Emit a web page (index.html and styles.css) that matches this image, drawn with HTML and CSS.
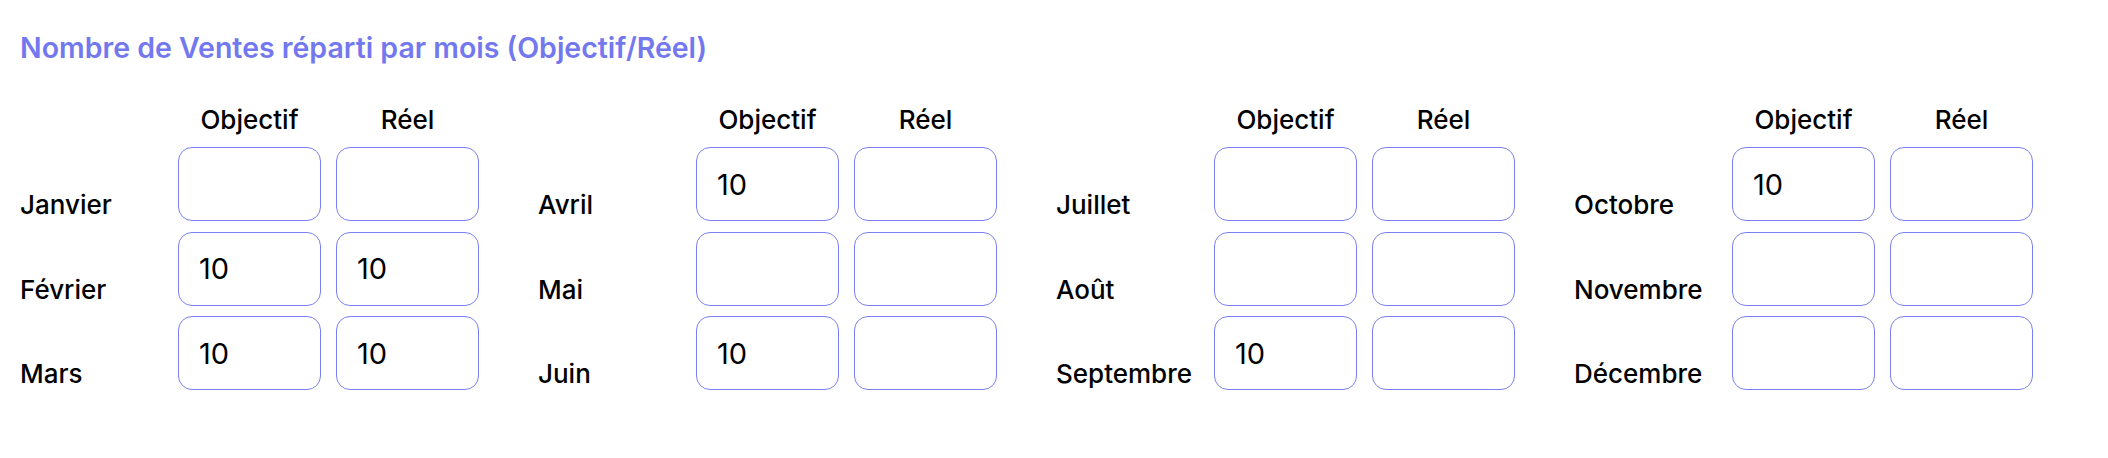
FILE: index.html
```html
<!DOCTYPE html>
<html lang="fr">
<head>
    <meta charset="UTF-8">
    <meta name="viewport" content="width=device-width, initial-scale=1.0">
    <title>Nombre de Ventes</title>
    <link rel="stylesheet" href="styles.css">
</head>
<body>
    <div class="page">
        <h2 class="title">Nombre de Ventes réparti par mois (Objectif/Réel)</h2>

        <div class="quarters">
            <div class="quarter">
                <span></span>
                <span class="col-head">Objectif</span>
                <span class="col-head">Réel</span>

                <label class="month">Janvier</label>
                <input class="field" type="text" value="">
                <input class="field" type="text" value="">

                <label class="month">Février</label>
                <input class="field" type="text" value="10">
                <input class="field" type="text" value="10">

                <label class="month">Mars</label>
                <input class="field" type="text" value="10">
                <input class="field" type="text" value="10">
            </div>

            <div class="quarter">
                <span></span>
                <span class="col-head">Objectif</span>
                <span class="col-head">Réel</span>

                <label class="month">Avril</label>
                <input class="field" type="text" value="10">
                <input class="field" type="text" value="">

                <label class="month">Mai</label>
                <input class="field" type="text" value="">
                <input class="field" type="text" value="">

                <label class="month">Juin</label>
                <input class="field" type="text" value="10">
                <input class="field" type="text" value="">
            </div>

            <div class="quarter">
                <span></span>
                <span class="col-head">Objectif</span>
                <span class="col-head">Réel</span>

                <label class="month">Juillet</label>
                <input class="field" type="text" value="">
                <input class="field" type="text" value="">

                <label class="month">Août</label>
                <input class="field" type="text" value="">
                <input class="field" type="text" value="">

                <label class="month">Septembre</label>
                <input class="field" type="text" value="10">
                <input class="field" type="text" value="">
            </div>

            <div class="quarter">
                <span></span>
                <span class="col-head">Objectif</span>
                <span class="col-head">Réel</span>

                <label class="month">Octobre</label>
                <input class="field" type="text" value="10">
                <input class="field" type="text" value="">

                <label class="month">Novembre</label>
                <input class="field" type="text" value="">
                <input class="field" type="text" value="">

                <label class="month">Décembre</label>
                <input class="field" type="text" value="">
                <input class="field" type="text" value="">
            </div>
        </div>
    </div>
</body>
</html>
```

FILE: styles.css
```css
body {
    font-family: Inter, "Noto Sans", sans-serif;
    color: #000;
    background: #fff;
    margin: 0;
    padding: 0;
}
.page {
    padding: 30px 16px 0 20px;
}
.title {
    margin: 0 0 39px;
    font-size: 28.5px;
    font-weight: 600;
    color: #7378ef;
}
.quarters {
    display: grid;
    grid-template-columns: repeat(4, 1fr);
}
.quarter {
    display: grid;
    grid-template-columns: 143px 143px 143px;
    column-gap: 15px;
    row-gap: 10.5px;
}
.col-head {
    font-size: 26px;
    font-weight: 500;
    text-align: center;
    margin-bottom: 1.5px;
}
.month {
    font-size: 26px;
    font-weight: 500;
    align-self: end;
    padding-bottom: 1px;
}
.field {
    box-sizing: border-box;
    width: 143px;
    height: 74px;
    padding: 0 20px;
    border: 1px solid #7b80f0;
    border-radius: 14px;
    font-family: Inter, "Noto Sans", sans-serif;
    font-size: 29px;
    color: #000;
    background: #fff;
    outline: none;
}
```
